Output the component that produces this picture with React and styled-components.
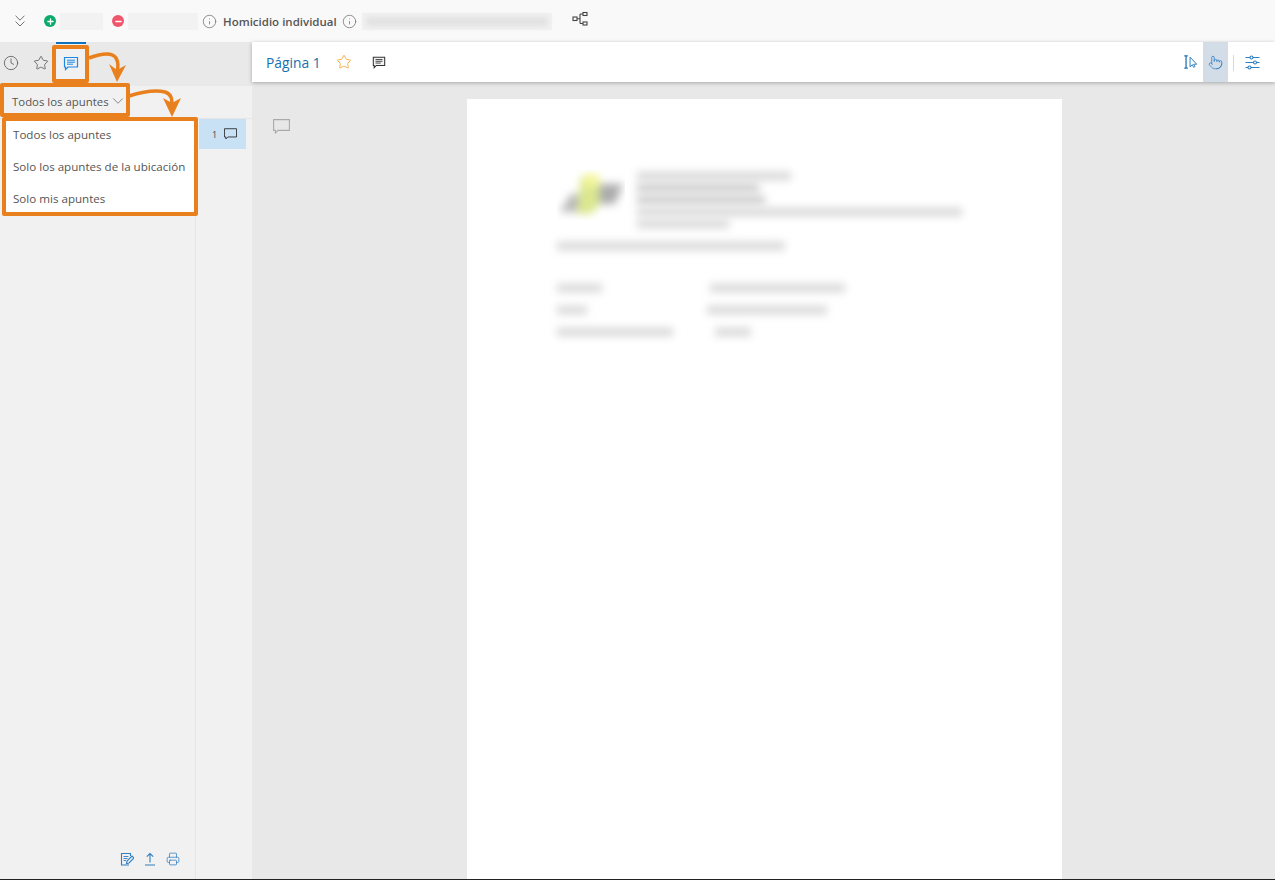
import { Fragment } from "react";
import styled, { createGlobalStyle } from "styled-components";
import { Clock, Star, ChevronDown, ChevronsDown, Plus, Minus, Info, Pointer, Printer } from "lucide-react";

const GlobalStyle = createGlobalStyle`
  html, body { margin: 0; padding: 0; background: #fff; }
  * { box-sizing: border-box; }
  body { font-family: "Open Sans", "Noto Sans", sans-serif; }
`

const Page = styled.div`
  position: relative;
  width: 1275px;
  height: 880px;
  display: flex;
  flex-direction: column;
  overflow: hidden;
  border-bottom: 1px solid #222;
`

const TopBar = styled.header`
  height: 42px;
  flex: none;
  display: flex;
  align-items: center;
  background: #f9f9f9;
  padding-left: 10px;
  color: #666;
`

const Round = styled.span`
  width: 12px;
  height: 12px;
  border-radius: 50%;
  background: ${p => p.$color};
  color: #fff;
  display: flex;
  align-items: center;
  justify-content: center;
  margin-left: ${p => p.$left}px;
`

const Blurred = styled.span`
  width: ${p => p.$w}px;
  height: 17px;
  margin-left: ${p => p.$left || 4}px;
  background: #f2f2f2;
  display: flex;
  align-items: center;
  padding: 0 4px;
  &::after {
    content: "";
    display: ${p => p.$inner ? "block" : "none"};
    width: 100%;
    height: 9px;
    background: #e0e0e0;
    filter: blur(3px);
  }
`

const InfoIcon = styled(Info)`
  width: 15px;
  height: 15px;
  color: #777;
  stroke-width: 1.3;
  margin-left: ${p => p.$left}px;
`

const CaseName = styled.strong`
  font-size: 11.5px;
  font-weight: 600;
  color: #555;
  margin-left: 6px;
  white-space: nowrap;
`

const TreeButton = styled.span`
  margin-left: 20px;
  margin-top: -5px;
  display: flex;
  color: #444;
`

const Main = styled.div`
  flex: 1;
  display: flex;
  min-height: 0;
`

const Sidebar = styled.aside`
  width: 252px;
  flex: none;
  display: flex;
  flex-direction: column;
  background: #f1f1f1;
`

const Tabs = styled.div`
  height: 44px;
  flex: none;
  display: flex;
  background: #e9e9e9;
  overflow: hidden;
`

const Tab = styled.button`
  width: 30px;
  flex: none;
  margin-left: ${p => p.$left || 0}px;
  border: 0;
  border-top: 2px solid ${p => p.$active ? "#0e72bd" : "transparent"};
  padding: 0 0 4px;
  background: ${p => p.$active ? "#f1f1f1" : "transparent"};
  color: ${p => p.$active ? "#1e88e5" : "#555"};
  display: flex;
  align-items: center;
  justify-content: center;
`

const FilterRow = styled.div`
  height: 33px;
  flex: none;
  display: flex;
  align-items: center;
  padding: 0 0 2px 12px;
  border-bottom: 1px solid #e6e6e6;
  font-size: 11.4px;
  color: #555;
`

const Columns = styled.div`
  flex: 1;
  display: flex;
  min-height: 0;
`

const NotesColumn = styled.div`
  width: 196px;
  flex: none;
  display: flex;
  flex-direction: column;
  justify-content: flex-end;
  border-right: 1px solid #e6e6e6;
`

const NotesTools = styled.div`
  display: flex;
  justify-content: flex-end;
  align-items: center;
  gap: 9px;
  padding: 0 15px 13px 0;
  color: #2f7fc1;
`

const PagesColumn = styled.div`
  flex: 1;
  padding: 0 6px 0 3px;
`

const PageChip = styled.div`
  height: 30px;
  background: #c9e1f5;
  display: flex;
  align-items: center;
  padding-left: 13px;
  gap: 7px;
  font-size: 9px;
  color: #444;
`

const Content = styled.section`
  flex: 1;
  display: flex;
  flex-direction: column;
  min-width: 0;
  background: #e8e8e8;
`

const PageHeader = styled.div`
  height: 40px;
  flex: none;
  display: flex;
  align-items: center;
  background: #fff;
  padding-left: 14px;
  box-shadow: 0 1px 4px rgba(0, 0, 0, 0.28);
  z-index: 1;
`

const PageLink = styled.a`
  font-size: 13.8px;
  color: #1a6fb0;
`

const HeaderStar = styled(Star)`
  margin-left: 15px;
  color: #f7b04f;
  stroke-width: 1.5;
`

const HeaderNote = styled.span`
  margin-left: 20px;
  display: flex;
  color: #333;
`

const ViewTools = styled.div`
  margin-left: auto;
  height: 100%;
  padding-right: 5px;
  display: flex;
  align-items: stretch;
  color: #2f7fc1;
`

const ViewTool = styled.button`
  width: ${p => p.$w || 25}px;
  border: 0;
  padding: 0;
  color: inherit;
  background: ${p => p.$active ? "#d3dde8" : "transparent"};
  display: flex;
  align-items: center;
  justify-content: center;
`

const ToolDivider = styled.span`
  width: 1px;
  height: 16px;
  margin: 13px 0 0 5px;
  background: #d8d8d8;
`

const Viewer = styled.div`
  flex: 1;
  min-height: 0;
  display: flex;
  padding-top: 17px;
  overflow: hidden;
`

const NoteGutter = styled.div`
  width: 215px;
  flex: none;
  padding: 18px 0 0 21px;
  color: #aaa;
`

const Sheet = styled.div`
  width: 595px;
  height: 800px;
  flex: none;
  background: #fff;
  padding: 71px 0 0 90px;
`

const SheetHeader = styled.div`
  display: flex;
  gap: 12px;
`

const SheetLines = styled.div`
  display: flex;
  flex-direction: column;
  gap: 4px;
  padding-top: 2px;
`

const Smudge = styled.div`
  width: ${p => p.$w}px;
  height: 8px;
  margin-left: ${p => p.$left || 0}px;
  background: ${p => p.$tone || "#d6d6d6"};
  filter: blur(4px);
`

const SheetTitle = styled(Smudge)`
  margin-top: 14px;
`

const SheetGrid = styled.div`
  margin-top: 34px;
  display: grid;
  grid-template-columns: 150px auto;
  row-gap: 14px;
`

const Menu = styled.ul`
  position: absolute;
  left: 5px;
  top: 121px;
  width: 190px;
  height: 91px;
  margin: 0;
  padding: 0;
  list-style: none;
  background: #fff;
  font-size: 11.6px;
  color: #555;
  z-index: 3;
`

const MenuItem = styled.li`
  height: 32px;
  padding-left: 8px;
  display: flex;
  align-items: center;
  white-space: nowrap;
  &:first-child { margin-top: -3px; }
`

const Callout = styled.div`
  position: absolute;
  left: ${p => p.$x}px;
  top: ${p => p.$y}px;
  width: ${p => p.$w}px;
  height: ${p => p.$h}px;
  border: 4px solid #e8801e;
  border-radius: 2px;
  z-index: 4;
`

const Arrows = styled.svg`
  position: absolute;
  left: 0;
  top: 0;
  z-index: 5;
  pointer-events: none;
`

const NoteLines = ({ size = 16, color = "currentColor", filled }) => (
  <svg width={size} height={size} viewBox="0 0 16 16" fill="none">
    <path d="M1.500 2.500h13v9.500H5l-2.500 2.500V12h-1z" stroke={color} strokeWidth="1.2" fill={filled || "none"} />
    <path d="M4 5.200h8M4 7.200h8M4 9.200h6" stroke={color} strokeWidth="1" />
  </svg>
)

const Bubble = ({ width, height, color = "currentColor" }) => (
  <svg width={width} height={height} viewBox="0 0 17 15" fill="none">
    <path d="M.6.600h15.800v10.800H5l-2.600 2.600v-2.600H.6z" stroke={color} strokeWidth="1.100" />
  </svg>
)

const TreeIcon = () => (
  <svg width="16" height="16" viewBox="0 0 16 16" fill="none" stroke="currentColor" strokeWidth="1.1">
    <rect x="1" y="6" width="4" height="3.500" />
    <rect x="11" y="1.500" width="4" height="3" />
    <rect x="11" y="11" width="4" height="3" />
    <path d="M5 7.700h3M8 3h3M8 12.500h3M8 3v9.500" />
  </svg>
)

const SelectIcon = () => (
  <svg width="15" height="16" viewBox="0 0 16 18" fill="none">
    <path d="M1 2h4M1 16h4M3 2v14" stroke="#1f6fb2" strokeWidth="1.400" />
    <path d="M7.500 3.500v11l2.500-2.500 1.500 3 1.500-.8-1.500-2.700h3.500z" stroke="#2f7fc1" strokeWidth="1.100" />
  </svg>
)

const SlidersIcon = () => (
  <svg width="15" height="15" viewBox="0 0 15 15" fill="none" stroke="currentColor" strokeWidth="1.100">
    <path d="M.5 2.500h4.500M8 2.500h6.500M.5 7.500h8M11.500 7.500h3M.5 12.500h2.500M6 12.500h8.500" />
    <circle cx="6.500" cy="2.500" r="1.500" />
    <circle cx="10" cy="7.500" r="1.500" />
    <circle cx="4.500" cy="12.500" r="1.500" />
  </svg>
)

const NoteEditIcon = () => (
  <svg width="14" height="14" viewBox="0 0 14 14" fill="none" stroke="currentColor" strokeWidth="1.100">
    <path d="M9 13H1.500V1.500h9V4" />
    <path d="M3.500 4.500h5M3.500 6.500h4M3.500 8.500h2.500" strokeWidth=".9" />
    <path d="M6.500 11.500l.5-2.500 5-5 2 2-5 5z" />
  </svg>
)

const UploadIcon = () => (
  <svg width="14" height="14" viewBox="0 0 14 14" fill="none" stroke="currentColor" strokeWidth="1.100">
    <path d="M2 13h10M7 10.500V1.500M3.800 4.700 7 1.500l3.200 3.200" />
  </svg>
)

const Logo = () => (
  <svg width="68" height="50" viewBox="0 0 68 50">
    <defs>
      <filter id="logoBlur" x="-20%" y="-20%" width="140%" height="140%"><feGaussianBlur stdDeviation="4" /></filter>
    </defs>
    <g filter="url(#logoBlur)">
      <path d="M3 42 14 24h18L24 42z" fill="#b8b8b8" />
      <path d="M42 14h24L58 34H38z" fill="#acacac" />
      <path d="M24 6h18v30l-8 8H20z" fill="#dbe78f" />
      <ellipse cx="35" cy="10" rx="8" ry="7" fill="#f4f79a" />
    </g>
  </svg>
)

const notes = ["Todos los apuntes", "Solo los apuntes de la ubicación", "Solo mis apuntes"]
const sheetRows = [[45, 135, 3], [30, 120, 0], [116, 36, 8]]

export default function App() {
  return (
    <Page>
      <GlobalStyle />
      <TopBar>
        <ChevronsDown size={20} strokeWidth={1.1} />
        <Round $color="#0bab6c" $left={14}><Plus size={9} strokeWidth={3.5} /></Round>
        <Blurred $w={43} />
        <Round $color="#f0566b" $left={9}><Minus size={9} strokeWidth={3.5} /></Round>
        <Blurred $w={70} />
        <InfoIcon $left={4} />
        <CaseName>Homicidio individual</CaseName>
        <InfoIcon $left={5} />
        <Blurred $w={190} $left={5} $inner />
        <TreeButton><TreeIcon /></TreeButton>
      </TopBar>

      <Main>
        <Sidebar>
          <Tabs>
            <Tab $left={-4}><Clock size={16} strokeWidth={1.2} /></Tab>
            <Tab><Star size={16} strokeWidth={1.2} /></Tab>
            <Tab $active><NoteLines /></Tab>
          </Tabs>
          <FilterRow>
            Todos los apuntes
            <ChevronDown size={18} strokeWidth={0.9} />
          </FilterRow>
          <Columns>
            <NotesColumn>
              <NotesTools>
                <NoteEditIcon />
                <UploadIcon />
                <Printer size={14} strokeWidth={1.3} />
              </NotesTools>
            </NotesColumn>
            <PagesColumn>
              <PageChip>
                1
                <Bubble width={13} height={12} color="#222" />
              </PageChip>
            </PagesColumn>
          </Columns>
        </Sidebar>

        <Content>
          <PageHeader>
            <PageLink>Página 1</PageLink>
            <HeaderStar size={16} />
            <HeaderNote><NoteLines size={14} filled="#f3f3f3" /></HeaderNote>
            <ViewTools>
              <ViewTool><SelectIcon /></ViewTool>
              <ViewTool $active><Pointer size={15} strokeWidth={1.3} /></ViewTool>
              <ToolDivider />
              <ViewTool $w={36}><SlidersIcon /></ViewTool>
            </ViewTools>
          </PageHeader>
          <Viewer>
            <NoteGutter><Bubble width={17} height={15} /></NoteGutter>
            <Sheet>
              <SheetHeader>
                <Logo />
                <SheetLines>
                  <Smudge $w={154} />
                  <Smudge $w={122} $tone="#c8c8c8" />
                  <Smudge $w={128} $tone="#c8c8c8" />
                  <Smudge $w={325} />
                  <Smudge $w={92} />
                </SheetLines>
              </SheetHeader>
              <SheetTitle $w={228} />
              <SheetGrid>
                {sheetRows.map(([a, b, offset]) => (
                  <Fragment key={a}>
                    <Smudge $w={a} />
                    <Smudge $w={b} $left={offset} />
                  </Fragment>
                ))}
              </SheetGrid>
            </Sheet>
          </Viewer>
        </Content>
      </Main>

      <Menu>
        {notes.map(n => <MenuItem key={n}>{n}</MenuItem>)}
      </Menu>
      <Callout $x={52} $y={45} $w={37} $h={38} />
      <Callout $x={0} $y={83} $w={130} $h={34} />
      <Callout $x={2} $y={117} $w={196} $h={99} />
      <Arrows width="200" height="120" viewBox="0 0 200 120" fill="none">
        <path d="M89 58C100 54 112 52 116 58C119 63 118 68 117 72" stroke="#e8801e" strokeWidth="3.500" />
        <path d="M109 64 117 82 126 65 117 70z" fill="#e8801e" />
        <path d="M129 96C142 92 156 90 165 92C172 94 172 100 172 106" stroke="#e8801e" strokeWidth="3.500" />
        <path d="M163 98 172 117 181 98 172 103z" fill="#e8801e" />
      </Arrows>
    </Page>
  )
}
